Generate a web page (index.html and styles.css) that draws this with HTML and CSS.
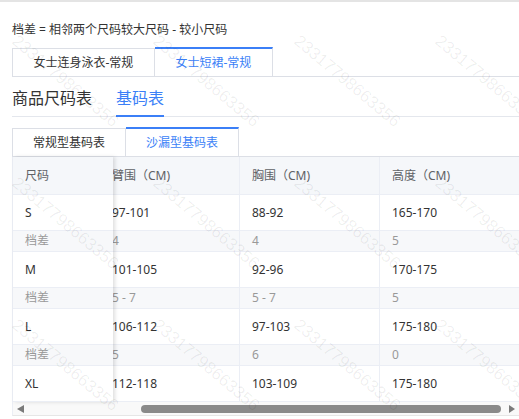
FILE: index.html
```html
<!DOCTYPE html>
<html lang="zh-CN">
<head>
<meta charset="utf-8">
<title>基码表</title>
<link rel="stylesheet" href="styles.css">
</head>
<body>
<div class="page">
  <div class="content">
    <p class="note">档差 = 相邻两个尺码较大尺码 - 较小尺码</p>
    <div class="tabs tabs-lg">
      <div class="tab">女士连身泳衣-常规</div>
      <div class="tab active">女士短裙-常规</div>
    </div>
    <div class="nav">
      <div class="nav-item">商品尺码表</div>
      <div class="nav-item active">基码表</div>
    </div>
    <div class="tabs tabs-sm">
      <div class="tab">常规型基码表</div>
      <div class="tab active">沙漏型基码表</div>
    </div>
    <div class="table">
      <div class="table-body">
        <div class="fixed">
          <div class="cell head">尺码</div>
          <div class="cell">S</div>
          <div class="cell diff">档差</div>
          <div class="cell">M</div>
          <div class="cell diff">档差</div>
          <div class="cell">L</div>
          <div class="cell diff">档差</div>
          <div class="cell">XL</div>
        </div>
        <div class="scroll">
          <div class="scroll-inner">
            <div class="row"><div class="cell head">臂围（CM)</div><div class="cell head">胸围（CM)</div><div class="cell head">高度（CM)</div></div>
            <div class="row"><div class="cell">97-101</div><div class="cell">88-92</div><div class="cell">165-170</div></div>
            <div class="row"><div class="cell diff">4</div><div class="cell diff">4</div><div class="cell diff">5</div></div>
            <div class="row"><div class="cell">101-105</div><div class="cell">92-96</div><div class="cell">170-175</div></div>
            <div class="row"><div class="cell diff">5 - 7</div><div class="cell diff">5 - 7</div><div class="cell diff">5</div></div>
            <div class="row"><div class="cell">106-112</div><div class="cell">97-103</div><div class="cell">175-180</div></div>
            <div class="row"><div class="cell diff">5</div><div class="cell diff">6</div><div class="cell diff">0</div></div>
            <div class="row"><div class="cell">112-118</div><div class="cell">103-109</div><div class="cell">175-180</div></div>
          </div>
        </div>
      </div>
      <div class="hscroll">
        <span class="arrow left"></span>
        <div class="track"><div class="thumb"></div></div>
        <span class="arrow right"></span>
      </div>
    </div>
  </div>
  <div class="watermarks">
    <span class="wm">23317798663356</span><span class="wm">23317798663356</span><span class="wm">23317798663356</span><span class="wm">23317798663356</span>
    <span class="wm">23317798663356</span><span class="wm">23317798663356</span><span class="wm">23317798663356</span><span class="wm">23317798663356</span>
    <span class="wm">23317798663356</span><span class="wm">23317798663356</span><span class="wm">23317798663356</span><span class="wm">23317798663356</span>
  </div>
</div>
</body>
</html>
```

FILE: styles.css
```css
html, body {
  margin: 0;
  padding: 0;
  overflow: hidden;
  background: #fff;
}
body {
  font-family: "Noto Sans", "Noto Sans CJK SC", sans-serif;
  font-size: 12px;
  color: #333;
}
.page {
  position: relative;
  height: 419px;
  overflow: hidden;
  border-top: 2px solid #e4e4e4;
  box-sizing: border-box;
}
.content {
  padding-left: 12px;
}
.note {
  margin: 18px 0 0;
  line-height: 20px;
  color: #333;
}
.tabs {
  display: flex;
  align-items: flex-end;
  border-bottom: 1px solid #dcdfe6;
}
.tabs-lg {
  margin-top: 7px;
}
.tabs-sm {
  margin-top: 10px;
}
.tab {
  height: 27px;
  line-height: 27px;
  padding: 0 20px;
  border-top: 1px solid #dcdfe6;
  border-right: 1px solid #dcdfe6;
  white-space: nowrap;
  color: #333;
}
.tabs-lg .tab {
  padding: 0 20.5px;
}
.tab:first-child {
  border-left: 1px solid #dcdfe6;
}
.tab.active {
  border-top: 2px solid #3b7ff7;
  color: #3b7ff7;
}
.nav {
  display: flex;
  gap: 24px;
  border-bottom: 1px solid #e4e7ed;
}
.nav-item {
  font-size: 16px;
  line-height: 22px;
  padding: 10px 0 6px;
  border-bottom: 2px solid transparent;
  margin-bottom: -1px;
  color: #333;
}
.nav-item.active {
  color: #3b7ff7;
  border-bottom-color: #3b7ff7;
}
.table {
  border-left: 1px solid #ebeef5;
  border-bottom: 1px solid #e6e6e6;
}
.table-body {
  display: flex;
}
.fixed {
  width: 100px;
  flex: none;
  position: relative;
  z-index: 1;
  background: #fff;
  box-shadow: 2px 0 4px rgba(0, 0, 0, 0.13);
}
.scroll {
  flex: 1;
  min-width: 0;
  overflow: hidden;
}
.scroll-inner {
  margin-left: -13px;
}
.row {
  display: flex;
}
.cell {
  box-sizing: border-box;
  height: 36px;
  line-height: 35px;
  padding-left: 12px;
  border-bottom: 1px solid #ebeef5;
  white-space: nowrap;
  color: #333;
}
.row .cell {
  width: 140px;
  flex: none;
  border-right: 1px solid #ebeef5;
}
.cell.head {
  height: 38px;
  line-height: 37px;
  background: #f5f7fa;
  color: #606266;
}
.cell.diff {
  height: 21px;
  line-height: 20px;
  background: #f7f8fa;
  color: #999;
}
.hscroll {
  display: flex;
  align-items: center;
  height: 13px;
  background: #f9f9f9;
}
.arrow {
  width: 14px;
  height: 13px;
  flex: none;
  display: flex;
  align-items: center;
  justify-content: center;
}
.arrow::before {
  content: "";
  border-top: 4px solid transparent;
  border-bottom: 4px solid transparent;
}
.arrow.left::before {
  border-right: 7px solid #7a7a7a;
}
.arrow.right::before {
  border-left: 6px solid #7a7a7a;
}
.track {
  flex: 1;
  height: 13px;
  display: flex;
  align-items: center;
}
.thumb {
  margin-left: 114px;
  width: 360px;
  height: 8px;
  border-radius: 4px;
  background: #8a8a8a;
}
.watermarks {
  position: absolute;
  left: 0;
  top: 0;
  width: 600px;
  height: 480px;
  box-sizing: border-box;
  padding: 30px 0 0 20px;
  display: grid;
  grid-template-columns: repeat(4, 141px);
  grid-auto-rows: 142px;
  pointer-events: none;
  z-index: 5;
}
.wm {
  display: block;
  width: 0;
  white-space: nowrap;
  transform: rotate(40deg);
  transform-origin: 0 0;
  font-family: "Liberation Sans", sans-serif;
  font-size: 17px;
  line-height: 17px;
  color: rgba(0, 0, 0, 0.065);
}
```
